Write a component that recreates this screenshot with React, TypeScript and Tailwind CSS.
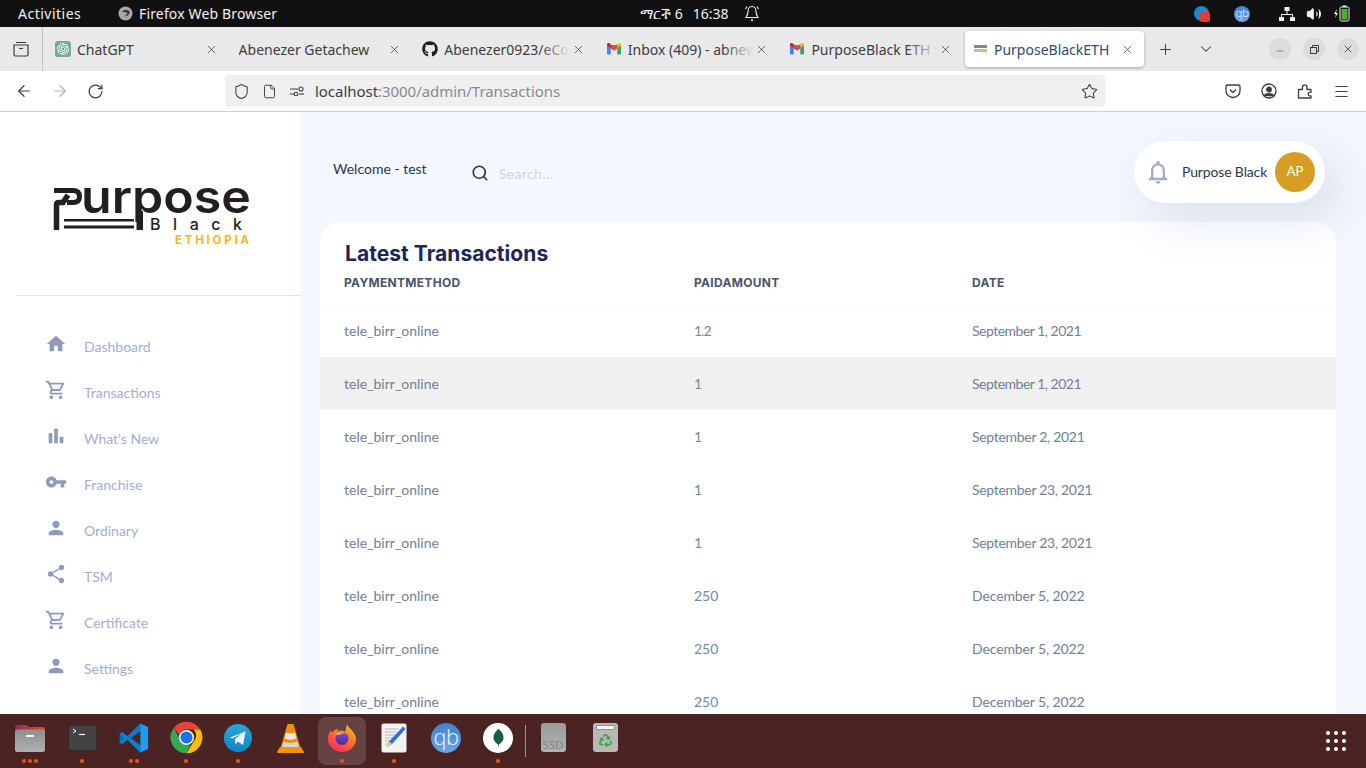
import React from "react";
import { MdHome, MdOutlineShoppingCart, MdBarChart, MdVpnKey, MdPerson, MdShare, MdOutlineNotifications } from "react-icons/md";
import { SiOpenai } from "react-icons/si";
import { FaGithub, FaRecycle } from "react-icons/fa";
import { X, Plus, ChevronDown, ArrowLeft, ArrowRight, RotateCw, Shield, File, Star, Menu, Search, Minus, Volume2 } from "lucide-react";

const UI = "font-['Noto_Sans','Open_Sans',sans-serif]";
const DM = "font-['Lato','Inter',sans-serif]";

function Gmail({ s = 14 }: { s?: number }) {
  return (
    <svg width={s} height={s * 0.8} viewBox="0 0 20 16" className="shrink-0">
      <path d="M0 3v11.500a1.500 1.500 0 0 0 1.500 1.500H5V7l5 3.800L15 7v9h3.500a1.500 1.500 0 0 0 1.500-1.500V3z" fill="#4285f4" />
      <path d="M15 16h3.500a1.500 1.500 0 0 0 1.500-1.500V3l-5 3.700z" fill="#34a853" />
      <path d="M0 3v11.500A1.500 1.500 0 0 0 1.500 16H5V6.700z" fill="#4285f4" />
      <path d="M5 7 10 10.800 15 7V1.500L10 5.200 5 1.500z" fill="#ea4335" />
      <path d="M15 1.500V7l5-3.700V2c0-1.800-2-2.700-3.300-1.700z" fill="#fbbc04" />
      <path d="M5 1.500V7L0 3.300V2C0 .2 2-.7 3.300.3z" fill="#c5221f" />
    </svg>
  );
}

function TabItem({ icon, label, fade }: { icon?: React.ReactNode; label: string; fade?: boolean }) {
  return (
    <div className="flex h-[36px] w-[183.6px] shrink-0 items-center pl-2">
      {icon && <div className="mr-[6px] flex w-[16px] shrink-0 items-center justify-center">{icon}</div>}
      <div className={`relative overflow-hidden whitespace-nowrap text-[14px] text-[#3d3d40] ${icon ? "w-[126px]" : "w-[148px]"}`}>
        {label}
        {fade && <div className="absolute inset-y-0 right-0 w-[30px] bg-gradient-to-r from-transparent to-[#e9e9e9]" />}
      </div>
      <X size={13} strokeWidth={1.4} className="ml-auto mr-[13px] shrink-0 text-[#3d3d40]" />
    </div>
  );
}

function Logo() {
  return (
    <svg width="200" height="62" viewBox="0 0 200 62" className="block">
      <path d="M1 3.500H20C25 3.500 26.500 6 26.500 9.500C26.500 13 25 15.500 20 15.500H14" fill="none" stroke="#231f20" strokeWidth="5" />
      <path d="M3.500 43V18Q3.500 15.500 6 15.500H10L15 8" fill="none" stroke="#231f20" strokeWidth="5.500" />
      <rect x="11" y="32" width="70" height="2.500" fill="#231f20" />
      <rect x="11" y="38.500" width="70" height="3" fill="#231f20" />
      <rect x="83.500" y="24" width="6.500" height="19" fill="#231f20" />
      <text x="28" y="26" textLength="170" lengthAdjust="spacingAndGlyphs" fontFamily="Inter, sans-serif" fontWeight="600" fontSize="46" fill="#231f20">urpose</text>
      <text x="97" y="42.500" textLength="92" fontFamily="Inter, sans-serif" fontWeight="500" fontSize="16" fill="#231f20">Black</text>
      <text x="122" y="56.500" textLength="74" fontFamily="Inter, sans-serif" fontWeight="700" fontSize="11.500" fill="#fdb714">ETHIOPIA</text>
    </svg>
  );
}

const nav: [string, React.ComponentType<any>][] = [
  ["Dashboard", MdHome],
  ["Transactions", MdOutlineShoppingCart],
  ["What's New", MdBarChart],
  ["Franchise", MdVpnKey],
  ["Ordinary", MdPerson],
  ["TSM", MdShare],
  ["Certificate", MdOutlineShoppingCart],
  ["Settings", MdPerson],
];

const rows: [string, string, string, string][] = [
  ["1.2", "tracking-[-1px]", "September 1, 2021", "tracking-[-0.5px]"],
  ["1", "", "September 1, 2021", "tracking-[-0.5px]"],
  ["1", "", "September 2, 2021", "tracking-[-0.3px]"],
  ["1", "", "September 23, 2021", "tracking-[-0.3px]"],
  ["1", "", "September 23, 2021", "tracking-[-0.3px]"],
  ["250", "", "December 5, 2022", "tracking-[-0.12px]"],
  ["250", "", "December 5, 2022", "tracking-[-0.12px]"],
  ["250", "", "December 5, 2022", "tracking-[-0.12px]"],
  ["250", "", "December 5, 2022", "tracking-[-0.12px]"],
];

function Dot({ n = 1 }: { n?: number }) {
  return (
    <div className="mt-[4px] flex h-[5px] gap-[2px]">
      {Array.from({ length: n }).map((_, i) => (
        <span key={i} className="h-[4px] w-[4px] rounded-full bg-[#e95420]" />
      ))}
    </div>
  );
}

function DockItem({ children, dots = 0, active }: { children: React.ReactNode; dots?: number; active?: boolean }) {
  return (
    <div className="relative flex h-[48px] w-[52px] shrink-0 flex-col items-center">
      {active && <div className="absolute inset-y-0 left-[2px] w-[48px] rounded-[8px] bg-white/15" />}
      <div className="relative flex h-[41px] items-center justify-center">{children}</div>
      <div className="absolute bottom-[1px]"><Dot n={dots} /></div>
    </div>
  );
}

function Folder() {
  return (
    <svg width="32" height="30" viewBox="0 0 32 30">
      <defs>
        <linearGradient id="ft" x1="0" x2="1" y1="0" y2="0"><stop offset="0" stopColor="#8b2f5c" /><stop offset="1" stopColor="#d8502c" /></linearGradient>
        <linearGradient id="fb" x1="0" x2="0" y1="0" y2="1"><stop offset="0" stopColor="#8f8f8f" /><stop offset="1" stopColor="#b0b0b0" /></linearGradient>
      </defs>
      <path d="M1 5a3 3 0 0 1 3-3h8l3 2h13a3 3 0 0 1 3 3v6H1z" fill="url(#ft)" />
      <rect x="1" y="6.500" width="30" height="22.500" rx="2.500" fill="url(#fb)" />
      <rect x="12" y="12" width="8" height="2" fill="#f2f2f2" />
    </svg>
  );
}

function Terminal() {
  return (
    <div className="flex h-[26px] w-[29px] flex-col rounded-[3px] border border-[#2c2c2c] bg-[#434343] pl-[3px] pt-[1px]">
      <svg width="14" height="10" viewBox="0 0 14 10"><path d="M1 2l3 2-3 2" fill="none" stroke="#fff" strokeWidth="1" /><path d="M7 7.500h6" stroke="#fff" strokeWidth="1.200" /></svg>
    </div>
  );
}

function VSCode() {
  return (
    <svg width="30" height="30" viewBox="0 0 100 100">
      <path d="M71 98 97 86V14L71 2 28 44 10 30 2 35v30l8 5 18-14z" fill="#0a6fb8" />
      <path d="M71 2 97 14v72L71 98z" fill="#1f9cf0" />
      <path d="M2 35 10 30 71 76V98L28 56 10 70 2 65 16 50z" fill="#0d7fd0" />
      <path d="M71 27 40 50l31 23z" fill="#4a2322" />
      <path d="M71 2v25L40 50 28 44z" fill="#0b7ac8" />
    </svg>
  );
}

function Chrome() {
  return (
    <svg width="33" height="33" viewBox="0 0 48 48">
      <path d="M24 1a23 23 0 0 1 20 11.500H24a11.500 11.500 0 0 0-10.500 7L5.500 10A23 23 0 0 1 24 1z" fill="#ea4335" />
      <path d="M44 12.500A23 23 0 0 1 24 47l10-17a11.500 11.500 0 0 0 0-17.500z" fill="#fbbc04" />
      <path d="M5.500 10l10 17.500a11.500 11.500 0 0 0 14 7.500L24 47A23 23 0 0 1 5.500 10z" fill="#34a853" />
      <circle cx="24" cy="24" r="11" fill="#fff" />
      <circle cx="24" cy="24" r="8.800" fill="#1a73e8" />
    </svg>
  );
}

function Telegram() {
  return (
    <svg width="28" height="28" viewBox="0 0 28 28">
      <defs><linearGradient id="tg" x1="0" x2="0" y1="0" y2="1"><stop offset="0" stopColor="#2aa5e0" /><stop offset="1" stopColor="#0b87c4" /></linearGradient></defs>
      <circle cx="14" cy="14" r="14" fill="url(#tg)" />
      <path d="M5.500 13.800 21.500 7.500 19 21l-5-3.500-2.500 2.500-.7-4.800 7-6-9 5z" fill="#fff" />
    </svg>
  );
}

function Vlc() {
  return (
    <svg width="27" height="30" viewBox="0 0 27 30">
      <path d="M10.500 1h6l7 24H3.500z" fill="#f28c10" />
      <path d="M9 9.500c2 1 7 1 9 0l1.500 6c-3 1.500-9 1.500-12 0z" fill="#e8e8e8" />
      <path d="M6.500 18.500c3 1.800 11 1.800 14 0l1.500 5c-4 2-13 2-17 0z" fill="#d5d5d5" />
      <path d="M3 24h21l3 5a1 1 0 0 1-1 1H1a1 1 0 0 1-1-1z" fill="#f5930f" />
    </svg>
  );
}

function Firefox({ s = 28 }: { s?: number }) {
  return (
    <svg width={s} height={s} viewBox="0 0 28 28">
      <defs>
        <linearGradient id="ff" x1="0.800" x2="0.200" y1="0" y2="1"><stop offset="0" stopColor="#ffbd2e" /><stop offset="0.500" stopColor="#ff6a2b" /><stop offset="1" stopColor="#f6246d" /></linearGradient>
        <linearGradient id="fp" x1="0.500" x2="0.500" y1="0" y2="1"><stop offset="0" stopColor="#7a4ae0" /><stop offset="1" stopColor="#50289c" /></linearGradient>
      </defs>
      <path d="M19 0c.8 3 3 4 5 6.500 2.500 3 4 5.500 4 8.500A14 13 0 0 1 0 15C0 11 1 8.500 3 6.500l1 2.500c1-2 3-4 6-4.500-1 1.500-1 2.500 0 3 2-1.500 5-1 7 .5 1-3 1.500-5 2-8z" fill="url(#ff)" />
      <circle cx="14" cy="14.500" r="6.500" fill="url(#fp)" />
      <path d="M6 11c3-3 9-4 13-1-3-1-6 0-8 1z" fill="#ffa92e" />
    </svg>
  );
}

function Editor() {
  return (
    <svg width="26" height="30" viewBox="0 0 26 30">
      <rect x="0.500" y="0.500" width="25" height="29" rx="2" fill="#f3f3f1" />
      <path d="M4 6h13M4 9h11M4 12h10M4 15h8M4 18h6M4 21h6" stroke="#a9a9a0" strokeWidth="0.800" />
      <path d="M22 3.500l2.500 2.500L11 21l-5 3 2-5.500z" fill="#2f6fd8" />
      <path d="M8 18.500 11 21l-5 3z" fill="#eccb98" />
    </svg>
  );
}

function Qb({ s = 30 }: { s?: number }) {
  return (
    <div className="flex items-center justify-center rounded-full bg-gradient-to-b from-[#3f7fd0] to-[#6ea6e6] font-['Noto_Sans',sans-serif] font-light text-[#e8f0fb]" style={{ width: s, height: s, fontSize: s * 0.72, lineHeight: 1 }}>
      <span className="relative top-[-1px] tracking-[-0.5px]">qb</span>
    </div>
  );
}

function Mongo() {
  return (
    <div className="flex h-[30px] w-[30px] items-center justify-center rounded-full bg-white">
      <svg width="11" height="20" viewBox="0 0 12 20"><path d="M6 0c3 3 5.500 5.500 5.500 9.500S8 16 6.500 17L6 20l-.6-3C4 16 .5 13.500.5 9.500S3 3 6 0z" fill="#116149" /></svg>
    </div>
  );
}

function SSD() {
  return (
    <div className="flex h-[29px] w-[25px] items-end justify-center overflow-hidden rounded-[3px] bg-gradient-to-b from-[#9c9c9c] to-[#b0b0b0] pb-[1px]">
      <span className="font-['Noto_Sans',sans-serif] text-[11.500px] leading-[13px] text-[#858585]">SSD</span>
    </div>
  );
}

function Trash() {
  return (
    <div className="flex h-[29px] w-[25px] flex-col items-center rounded-[3px] bg-[#b8b8b6] pt-[2px]">
      <div className="h-[5px] w-[19px] rounded-[1px] border border-[#8f8f8f] bg-[#f4f4f4]" />
      <FaRecycle size={13} color="#3fa33f" className="mt-[4px]" />
    </div>
  );
}

export default function App() {
  return (
    <div className="flex h-screen w-full flex-col overflow-hidden bg-white">
      {/* GNOME top bar */}
      <div className={`flex h-[27px] shrink-0 items-center bg-[#111111] text-[14px] text-[#f2f2f2] ${UI}`}>
        <div className="w-[118px] pl-[18px] tracking-[0.5px]">Activities</div>
        <div className="flex w-[522px] items-center gap-[6px]">
          <svg width="15" height="15" viewBox="0 0 15 15"><circle cx="7.500" cy="7.500" r="7" fill="#a8a8a8" /><path d="M4 6c2-3 6-3 8 0-1 3-3 5-6 4 2 0 3-1 3-3-1-1-3-1-5-1z" fill="#3a3a3a" /></svg>
          <span className="tracking-[0.15px]">Firefox Web Browser</span>
        </div>
        <div className="flex items-center gap-[10px] whitespace-nowrap">
          <span className="font-['Noto_Sans','DejaVu_Sans',sans-serif]">ማርች 6</span>
          <span>16:38</span>
          <svg width="16" height="17" viewBox="0 0 16 17" className="ml-[6px]" fill="none" stroke="#f2f2f2" strokeWidth="1.100"><path d="M8 1.500c-3 0-4 2.500-4 5 0 3-1 4.500-2 6h12c-1-1.500-2-3-2-6 0-2.500-1-5-4-5z" /><path d="M3 1.500 1.500 4M13 1.500 14.500 4" /><circle cx="8" cy="15" r="1" fill="#f2f2f2" stroke="none" /></svg>
        </div>
        <div className="ml-auto flex items-center">
          <div className="relative mr-[25px] h-[15px] w-[15px] rounded-full bg-[#1a88d8]">
            <span className="absolute -bottom-[1px] -right-[1px] h-[10px] w-[10px] rounded-[2px] bg-[#e53935]" />
          </div>
          <div className="mr-[29px]"><Qb s={16} /></div>
          <svg width="16" height="14" viewBox="0 0 16 14" className="mr-[11px]" fill="#f2f2f2"><rect x="5.500" y="0" width="5" height="4" /><rect x="0" y="10" width="5" height="4" /><rect x="11" y="10" width="5" height="4" /><path d="M7.500 4h1v3H14v3h-1V8H3v2H2V7h5.500z" /></svg>
          <Volume2 size={16} className="mr-[12px]" fill="#f2f2f2" strokeWidth={1.4} />
          <svg width="16" height="17" viewBox="0 0 16 17" className="mr-[16px]"><path d="M3 4 0 9h2l-1 4 3-5H2z" fill="#f2f2f2" /><rect x="6" y="2" width="9" height="14" rx="1.500" fill="none" stroke="#f2f2f2" /><rect x="7.500" y="4" width="6" height="10.500" fill="#4caf2f" /><rect x="8.500" y="0.500" width="4" height="1.500" fill="#f2f2f2" /></svg>
        </div>
      </div>

      {/* Firefox tab strip */}
      <div className={`flex h-[44px] shrink-0 items-center bg-[#e9e9e9] ${UI}`}>
        <div className="flex h-full w-[43px] shrink-0 items-center justify-center border-r border-[#c4c4c4]">
          <svg width="16" height="16" viewBox="0 0 16 16" fill="none" stroke="#3d3d40" strokeWidth="1.200"><path d="M3 1.500h10M1 4h14v9.500a1.500 1.500 0 0 1-1.500 1.500h-11A1.500 1.500 0 0 1 1 13.500z" /><path d="M6 7.500h4" /></svg>
        </div>
        <div className="flex pl-[4px]">
          <TabItem label="ChatGPT" icon={<span className="flex h-[16px] w-[16px] items-center justify-center rounded-[3px] bg-[#74aa9c]"><SiOpenai size={12} color="#fff" /></span>} />
          <TabItem label="Abenezer Getachew" />
          <TabItem label="Abenezer0923/eCommerce" fade icon={<FaGithub size={16} color="#1b1f23" />} />
          <TabItem label="Inbox (409) - abnew@gmail.com" fade icon={<Gmail />} />
          <TabItem label="PurposeBlack ETH System" fade icon={<Gmail />} />
        </div>
        <div className="flex h-[36px] w-[179px] shrink-0 items-center rounded-[4px] bg-white pl-[9px] shadow-[0_1px_3px_rgba(0,0,0,0.3)]">
          <svg width="13" height="8" viewBox="0 0 13 8" className="mr-[7px] shrink-0"><rect width="13" height="3" y="0" fill="#555" opacity="0.7" /><rect width="13" height="3" y="4" fill="#bbb" /><rect x="8" y="5.500" width="5" height="2" fill="#e8c35a" /></svg>
          <span className="whitespace-nowrap text-[14px] text-[#2e4b70]">PurposeBlackETH</span>
          <X size={13} strokeWidth={1.4} className="ml-auto mr-[10px] text-[#3d3d40]" />
        </div>
        <Plus size={17} strokeWidth={1.4} className="ml-[13px] text-[#3d3d40]" />
        <ChevronDown size={18} strokeWidth={1.4} className="ml-[23px] text-[#3d3d40]" />
        <div className="ml-auto mr-[7px] flex gap-[12px]">
          <div className="flex h-[22px] w-[22px] items-center justify-center rounded-full bg-[#dcdcdc]"><Minus size={10} strokeWidth={1.4} className="mt-[3px] text-[#3d3d40]" /></div>
          <div className="flex h-[22px] w-[22px] items-center justify-center rounded-full bg-[#dcdcdc]"><svg width="9" height="9" viewBox="0 0 9 9" fill="none" stroke="#3d3d40"><rect x="0.500" y="2.500" width="6" height="6" /><path d="M2.500 2.500v-2h6v6h-2" /></svg></div>
          <div className="flex h-[22px] w-[22px] items-center justify-center rounded-full bg-[#dcdcdc]"><X size={12} strokeWidth={1.6} className="text-[#3d3d40]" /></div>
        </div>
      </div>

      {/* Toolbar */}
      <div className={`flex h-[41px] shrink-0 items-center border-b border-[#cfcfcf] bg-white ${UI}`}>
        <ArrowLeft size={18} strokeWidth={1.6} className="ml-[15px] text-[#3d3d40]" />
        <ArrowRight size={18} strokeWidth={1.6} className="ml-[18px] text-[#b4b4b6]" />
        <RotateCw size={17} strokeWidth={1.7} className="ml-[18px] text-[#3d3d40]" />
        <div className="ml-[121px] flex h-[32px] w-[880px] items-center rounded-[4px] bg-[#f0f0f0] pl-[8px]">
          <Shield size={17} strokeWidth={1.5} className="text-[#3d3d40]" />
          <File size={15} strokeWidth={1.5} className="ml-[12px] text-[#3d3d40]" />
          <svg width="14" height="10" viewBox="0 0 14 10" className="ml-[13px]" fill="none" stroke="#3d3d40" strokeWidth="1.100"><path d="M0 3h8M0 8h4" /><circle cx="11" cy="3" r="2" /><circle cx="6" cy="8" r="1.800" /><path d="M9 8h5" /></svg>
          <span className="ml-[11px] text-[15px] tracking-[-0.04px] text-[#3d3d40]">localhost<span className="text-[#8a8a8e]">:3000/admin/Transactions</span></span>
          <Star size={17} strokeWidth={1.5} className="ml-auto mr-[7px] text-[#3d3d40]" />
        </div>
        <div className="ml-auto flex items-center gap-[20px] pr-[16px] text-[#3d3d40]">
          <svg width="16" height="16" viewBox="0 0 16 16" fill="none" stroke="#3d3d40" strokeWidth="1.300"><path d="M1 3.500A1.500 1.500 0 0 1 2.500 2h11A1.500 1.500 0 0 1 15 3.500V8a7 6.500 0 0 1-14 0z" /><path d="M5 6.500 8 9.500l3-3" /></svg>
          <svg width="16" height="16" viewBox="0 0 16 16" fill="none" stroke="#3d3d40" strokeWidth="1.300"><circle cx="8" cy="8" r="7" /><circle cx="8" cy="6.500" r="2.300" fill="#3d3d40" /><path d="M3.500 12.500c1-2.500 8-2.500 9 0z" fill="#3d3d40" /></svg>
          <svg width="16" height="16" viewBox="0 0 16 16" fill="none" stroke="#3d3d40" strokeWidth="1.300"><path d="M1.500 15V6.500h4V4a2.200 2.200 0 0 1 4.400 0v2.500H14v2.800h-1a1.800 1.800 0 0 0 0 3.600h1V15z" strokeLinejoin="round" /></svg>
          <Menu size={17} strokeWidth={1.4} />
        </div>
      </div>

      {/* Page */}
      <div className={`flex min-h-0 flex-1 ${DM}`}>
        <aside className="flex w-[300px] shrink-0 flex-col bg-white">
          <div className="ml-[16px] h-[184px] border-b border-[#e1e3ec] pl-[37px] pt-[75px]"><Logo /></div>
          <nav className="flex flex-col pl-[45px] pt-[35px]">
            {nav.map(([label, Icon]) => (
              <div key={label} className="flex h-[46px] items-start">
                <Icon size={22} className="mt-[2px] text-[#8f9bba]" />
                <span className="ml-[17px] pt-[6px] text-[14px] leading-[20px] text-[#a3aed0]">{label}</span>
              </div>
            ))}
          </nav>
        </aside>

        <main className="min-w-0 flex-1 bg-[#f4f7fe] pl-[20px] pr-[30px]">
          <header className="relative z-10 flex h-[110px] items-start">
            <div className="pl-[13px] pt-[47px] text-[14px] leading-[20px] text-[#2d3748]">Welcome - test</div>
            <div className="ml-[44px] flex items-center pt-[50px]">
              <Search size={18} strokeWidth={2.2} className="text-[#2d3748]" />
              <span className="ml-[10px] mt-[2px] text-[14px] leading-[20px] tracking-[0.4px] text-[#cdd5e5]">Search...</span>
            </div>
            <div className="ml-auto mr-[11px] mt-[29px] flex h-[62px] w-[191px] items-center rounded-[31px] bg-white pl-[10px] shadow-[14px_17px_40px_4px_rgba(112,144,176,0.18)]">
              <MdOutlineNotifications size={28} className="text-[#a3aec4]" />
              <span className="mb-[2px] ml-[10px] whitespace-nowrap text-[14px] tracking-[-0.15px] text-[#2d3748]">Purpose Black</span>
              <div className="ml-auto mr-[10px] flex h-[40px] w-[40px] items-center justify-center rounded-full bg-[#d69e22] text-[13px] text-white">AP</div>
            </div>
          </header>

          <section className="rounded-t-[20px] bg-white">
            <h2 className="pl-[25px] pt-[18px] font-['Inter',sans-serif] text-[21px] font-bold leading-[28px] tracking-[0.05px] text-[#1b2559]">Latest Transactions</h2>
            <table className="w-full border-collapse text-left">
              <thead>
                <tr className="h-[36px] border-b border-[#fafafb]">
                  <th className="w-[350px] pb-[5px] pl-[24px] font-['Inter',sans-serif] text-[12px] font-bold tracking-[0.3px] text-[#4a5568]">PAYMENTMETHOD</th>
                  <th className="w-[278px] pb-[5px] pl-[24px] font-['Inter',sans-serif] text-[12px] font-bold tracking-[0.3px] text-[#4a5568]">PAIDAMOUNT</th>
                  <th className="pb-[5px] pl-[24px] font-['Inter',sans-serif] text-[12px] font-bold tracking-[0.3px] text-[#4a5568]">DATE</th>
                </tr>
              </thead>
              <tbody>
                {rows.map(([a, at, d, dt], i) => (
                  <tr key={i} className={`h-[53px] text-[14px] ${i === 1 ? "bg-[#f0f0f0]" : ""}`}>
                    <td className="pl-[24px] text-[#718096]">tele_birr_online</td>
                    <td className={`pl-[24px] text-[#718aa6] ${at}`}>{a}</td>
                    <td className={`pl-[24px] text-[#718096] ${dt}`}>{d}</td>
                  </tr>
                ))}
              </tbody>
            </table>
          </section>
        </main>
      </div>

      {/* Dock */}
      <div className="relative flex h-[54px] shrink-0 items-center bg-[#4a2322] pl-[4px] pr-[20px]">
        <DockItem dots={3}><Folder /></DockItem>
        <DockItem dots={1}><Terminal /></DockItem>
        <DockItem dots={2}><VSCode /></DockItem>
        <DockItem dots={1}><Chrome /></DockItem>
        <DockItem dots={1}><Telegram /></DockItem>
        <DockItem><Vlc /></DockItem>
        <DockItem dots={1} active><Firefox /></DockItem>
        <DockItem dots={1}><Editor /></DockItem>
        <DockItem><Qb /></DockItem>
        <DockItem dots={1}><Mongo /></DockItem>
        <div className="mx-[1px] h-[32px] w-px bg-white/50" />
        <DockItem><SSD /></DockItem>
        <DockItem><Trash /></DockItem>
        <div className="ml-auto grid grid-cols-3 gap-[4px]">
          {Array.from({ length: 9 }).map((_, i) => (
            <span key={i} className="h-[4px] w-[4px] rounded-full bg-white" />
          ))}
        </div>
      </div>
    </div>
  );
}
